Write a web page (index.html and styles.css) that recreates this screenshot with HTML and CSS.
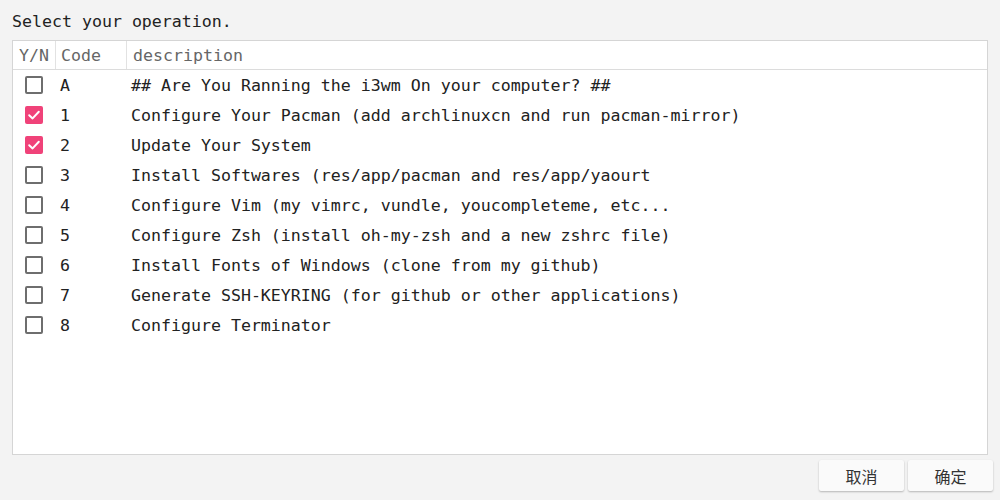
FILE: index.html
```html
<!DOCTYPE html>
<html>
<head>
<meta charset="utf-8">
<link rel="stylesheet" href="styles.css">
</head>
<body>
<div class="title">Select your operation.</div>
<div class="table">
  <div class="row head">
    <div class="c-yn">Y/N</div>
    <div class="c-code">Code</div>
    <div class="c-desc">description</div>
  </div>
  <div class="row"><div class="c-yn"><span class="cb"></span></div><div class="c-code">A</div><div class="c-desc">## Are You Ranning the i3wm On your computer? ##</div></div>
  <div class="row"><div class="c-yn"><span class="cb on"><svg viewBox="0 0 18 18"><path d="M4.2 9.2 L7.6 12.4 L13.8 5.8" fill="none" stroke="#fff" stroke-width="2" stroke-linecap="round" stroke-linejoin="round"/></svg></span></div><div class="c-code">1</div><div class="c-desc">Configure Your Pacman (add archlinuxcn and run pacman-mirror)</div></div>
  <div class="row"><div class="c-yn"><span class="cb on"><svg viewBox="0 0 18 18"><path d="M4.2 9.2 L7.6 12.4 L13.8 5.8" fill="none" stroke="#fff" stroke-width="2" stroke-linecap="round" stroke-linejoin="round"/></svg></span></div><div class="c-code">2</div><div class="c-desc">Update Your System</div></div>
  <div class="row"><div class="c-yn"><span class="cb"></span></div><div class="c-code">3</div><div class="c-desc">Install Softwares (res/app/pacman and res/app/yaourt</div></div>
  <div class="row"><div class="c-yn"><span class="cb"></span></div><div class="c-code">4</div><div class="c-desc">Configure Vim (my vimrc, vundle, youcompleteme, etc...</div></div>
  <div class="row"><div class="c-yn"><span class="cb"></span></div><div class="c-code">5</div><div class="c-desc">Configure Zsh (install oh-my-zsh and a new zshrc file)</div></div>
  <div class="row"><div class="c-yn"><span class="cb"></span></div><div class="c-code">6</div><div class="c-desc">Install Fonts of Windows (clone from my github)</div></div>
  <div class="row"><div class="c-yn"><span class="cb"></span></div><div class="c-code">7</div><div class="c-desc">Generate SSH-KEYRING (for github or other applications)</div></div>
  <div class="row"><div class="c-yn"><span class="cb"></span></div><div class="c-code">8</div><div class="c-desc">Configure Terminator</div></div>
</div>
<div class="buttons">
  <button class="btn">取消</button>
  <button class="btn">确定</button>
</div>
</body>
</html>
```
FILE: styles.css
```css
html, body {
  margin: 0;
  padding: 0;
  background: #f3f3f3;
  width: 1000px;
  height: 500px;
  overflow: hidden;
}
body {
  font-family: "DejaVu Sans Mono", monospace;
  font-size: 16.6px;
  color: #222;
}
.title {
  margin: 12px 0 0 12px;
  line-height: 20px;
  height: 20px;
  margin-bottom: 8px;
}
.table {
  margin-left: 12px;
  width: 974px;
  height: 413px;
  background: #fff;
  border: 1px solid #d5d5d5;
}
.row {
  display: flex;
  height: 30px;
  align-items: center;
}
.row.head {
  height: 28px;
  border-bottom: 1px solid #dcdcdc;
  color: #666;
  align-items: stretch;
}
.head > div {
  display: flex;
  align-items: center;
}
.head .c-yn {
  justify-content: center;
  border-right: 1px solid #e2e2e2;
}
.head .c-code {
  border-right: 1px solid #e2e2e2;
}
.c-yn {
  width: 42px;
  display: flex;
  justify-content: center;
  align-items: center;
  flex: none;
}
.c-code {
  width: 65px;
  padding-left: 5px;
  flex: none;
}
.head .c-code { padding-left: 5px; width: 65px; }
.c-desc {
  padding-left: 6px;
  white-space: pre;
}
.head .c-desc { padding-left: 6px; }
.cb {
  box-sizing: border-box;
  width: 18px;
  height: 18px;
  border: 2px solid #6e6e6e;
  border-radius: 2px;
  display: block;
}
.cb.on {
  border: none;
  background: #f04279;
}
.cb svg {
  display: block;
  width: 18px;
  height: 18px;
}
.buttons {
  display: flex;
  justify-content: flex-end;
  gap: 4px;
  padding-right: 7px;
  margin-top: 5px;
}
.btn {
  width: 85px;
  height: 31px;
  background: #fafafa;
  border: none;
  border-radius: 2px;
  box-shadow: 0 1px 2px rgba(0,0,0,0.25);
  font-family: "Noto Sans CJK SC", sans-serif;
  font-size: 16px;
  color: #333;
  padding: 0;
}
```
